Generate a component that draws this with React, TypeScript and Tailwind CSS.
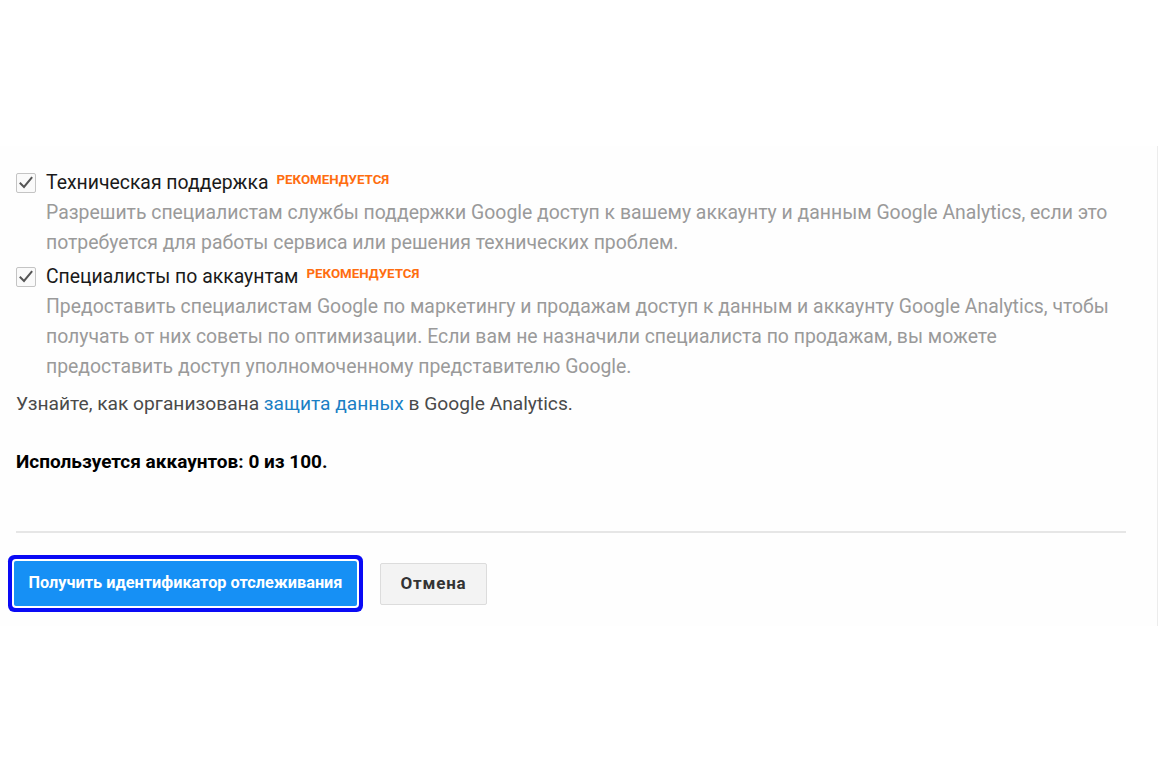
import React from 'react';

const CheckIcon = () => (
  <div className="w-[20px] h-[20px] shrink-0 border border-[#c4c4c4] bg-[#fafafa] rounded-[2px] flex items-center justify-center">
    <svg className="w-[16px] h-[16px]" viewBox="0 0 16 16" fill="none">
      <path d="M2.5 8.5l3.5 3.5 7.5-9" stroke="#555" strokeWidth="2" strokeLinecap="square" />
    </svg>
  </div>
);

interface OptionProps {
  title: string;
  lines: string[];
}

const Option: React.FC<OptionProps> = ({ title, lines }) => (
  <div>
    <div className="flex items-center h-[30px]">
      <CheckIcon />
      <span className="ml-[10px] text-[19.4px] text-[#1a1a1a]">{title}</span>
      <span className="ml-[8px] -mt-[6px] text-[13.3px] font-bold text-[#ff6d10]">РЕКОМЕНДУЕТСЯ</span>
    </div>
    <div className="pl-[30px] text-[19.4px] leading-[30px] text-[#9a9a9a]">
      {lines.map((l) => (
        <div key={l}>{l}</div>
      ))}
    </div>
  </div>
);

export default function App() {
  return (
    <div className="w-[1160px] h-[771px] bg-white pt-[146px]" style={{ fontFamily: 'Roboto, "Noto Sans", sans-serif' }}>
      <div className="w-[1158px] h-[480px] bg-[#fefefe] border-r border-[#ececec] pl-4 pr-[31px] pt-[22px]">
        <Option
          title="Техническая поддержка"
          lines={[
            'Разрешить специалистам службы поддержки Google доступ к вашему аккаунту и данным Google Analytics, если это',
            'потребуется для работы сервиса или решения технических проблем.',
          ]}
        />
        <div className="mt-[4px]">
          <Option
            title="Специалисты по аккаунтам"
            lines={[
              'Предоставить специалистам Google по маркетингу и продажам доступ к данным и аккаунту Google Analytics, чтобы',
              'получать от них советы по оптимизации. Если вам не назначили специалиста по продажам, вы можете',
              'предоставить доступ уполномоченному представителю Google.',
            ]}
          />
        </div>
        <p className="mt-[7px] text-[19.2px] leading-[30px] text-[#4a4a4a]">
          Узнайте, как организована <a className="text-[#1a7fc4]">защита данных</a> в Google Analytics.
        </p>
        <p className="mt-[28px] text-[19px] leading-[30px] font-bold text-black">Используется аккаунтов: 0 из 100.</p>
        <div className="mt-[54px] h-[2px] bg-[#e6e6e6]" />
        <div className="mt-[28px] flex items-center gap-[23px]">
          <button className="-ml-[2px] w-[343px] h-[45px] rounded-[2px] bg-[#1690f5] text-white text-[16.3px] font-bold shadow-[0_0_0_2px_#ffffff,0_0_0_6px_#0a0af5]">
            Получить идентификатор отслеживания
          </button>
          <button className="w-[107px] h-[42px] rounded-[2px] bg-[#f3f3f3] border border-[#dcdcdc] text-[#333] text-[17px] tracking-[0.8px] font-bold">
            Отмена
          </button>
        </div>
      </div>
    </div>
  );
}
